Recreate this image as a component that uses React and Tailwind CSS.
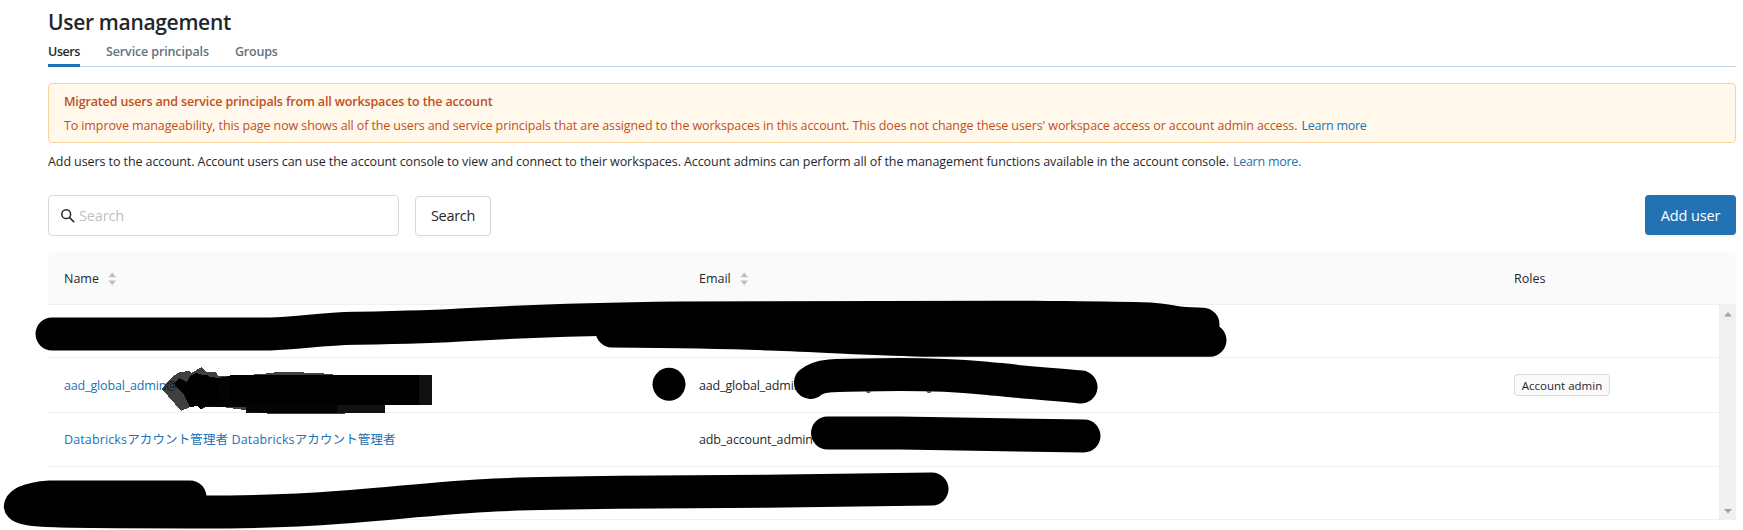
import React from 'react';

const rows = [
  { h: 'h-[53px]' },
  { h: 'h-[55px] pt-0.5', name: 'aad_global_admin@', email: 'aad_global_admin', role: 'Account admin', track: 'tracking-[-0.15px]' },
  { h: 'h-[54px]', name: 'Databricksアカウント管理者 Databricksアカウント管理者', email: 'adb_account_admin', track: 'tracking-[0.13px]' },
  { h: 'h-[53px]' },
];

const fit = 'whitespace-nowrap';

function Sorter() {
  return (
    <svg width="9" height="14" viewBox="0 0 9 14" className="fill-[#bfbfbf]">
      <path d="M4.2 .6 8 5.2H.4z" />
      <path d="M4.2 13.2 8 8.6H.4z" />
    </svg>
  );
}

function Redactions() {
  return (
    <svg className="pointer-events-none absolute left-0 top-0" width="1743" height="530" viewBox="0 0 1743 530" fill="none">
      <g shapeRendering="crispEdges">
        <path fillOpacity=".75" fill="#000" d="M162 389 168 381 173 376 180 372 190 371 191 373 202 367 206 372H216L218 376 230 376 262 374 278 372H288L320 373 337 375V413H345V414H270L245 410 222 407 208 406 202 409 198 406 190 407 181 411z" />
        <path fillOpacity=".935" fill="#000" d="M174 383 179 378 187 382 190 376 196 373 206 376 218 378 230 376 432 375V405H385V413H246V407H203L201 410 198 406 190 407 184 395 176 387z" />
        <path fill="#000" d="M186 384 190 378 194 374 199 376 208 375 210 378H216L222 401 210 405 203 406 201 410 198 406 190 405 186 396 182 390z" />
        <path fill="#000" d="M230 375H419V405H230z" />
      </g>
      <path d="M866.500 391.500q2 1.500 4 0M927 391.500q2 1.500 4 0" stroke="#3b3f55" strokeWidth="1.300" />
      <g stroke="#000" strokeWidth="33" strokeLinecap="round" strokeLinejoin="round">
        <path d="M52 334H270C300 333 320 329 355 328.300C400 327.500 430 327 470 324.500C540 320.500 600 319 680 318C760 317 900 317 1035 317.200C1080 317.800 1110 318 1150 319C1165 320 1175 323 1185 323.500L1203 324.200" />
        <path d="M612 331C680 331.500 720 332 770 334C830 336 880 339.500 930 340.200H1210" />
        <path d="M810.500 382.500C820 374 835 375 900 374.500C960 374.500 970 377 1000 379.500C1030 383 1050 384 1081 387" />
        <path d="M827.500 433H900L1084 436" />
        <path d="M190 497H50C35 498 22 502 20.500 506C25 511 50 512 200 512C290 512 340 508 400 502.300C480 495 500 493.500 620 492.300C760 491.500 780 491 932 489" />
      </g>
      <circle cx="669" cy="384.300" r="16.500" fill="#000" />
    </svg>
  );
}

export default function App() {
  return (
    <div className="relative h-[530px] w-[1743px] overflow-hidden bg-white pl-12 pr-[7px] font-['Open_Sans','Noto_Sans_CJK_JP',sans-serif] text-[12.5px] leading-5 text-[#1f272d]">
      <h1 className="pt-2 text-[21px] font-semibold leading-7 tracking-[-0.32px]"><span className={fit}>User management</span></h1>
      <nav className="flex h-[31px] border-b border-[#c5d7e8] pt-[5px] font-semibold text-[#64727d]">
        <a className="mr-[26px] h-[26px] w-8 border-b-[3px] border-[#2272b4] pt-px tracking-[-0.4px] text-[#1f272d]"><span className={fit}>Users</span></a>
        <a className="mr-[26px] w-[103px] pt-px tracking-[-0.13px]"><span className={fit}>Service principals</span></a>
        <a className="pt-px tracking-[-0.2px]"><span className={fit}>Groups</span></a>
      </nav>
      <section className="mt-4 h-[60px] rounded border border-[#f8d4a0] bg-[#fff8eb] px-[15px] pt-2 text-[#be501e]">
        <div className="h-6 font-semibold tracking-[-0.15px]"><span className={fit}>Migrated users and service principals from all workspaces to the account</span></div>
        <div className="flex gap-1 tracking-[-0.108px]">
          <span className={fit}>To improve manageability, this page now shows all of the users and service principals that are assigned to the workspaces in this account. This does not change these users' workspace access or account admin access.</span>
          <a className="whitespace-nowrap tracking-[-0.25px] text-[#2272b4]">Learn more</a>
        </div>
      </section>
      <p className="mt-[9px] flex gap-1 tracking-[-0.085px]">
        <span className={fit}>Add users to the account. Account users can use the account console to view and connect to their workspaces. Account admins can perform all of the management functions available in the account console.</span>
        <a className="whitespace-nowrap tracking-[-0.25px] text-[#2272b4]">Learn more.</a>
      </p>
      <div className="mt-[23px] flex h-[41px] items-end text-[14.5px]">
        <div className="flex h-[41px] w-[351px] items-center rounded border border-[#d9d9d9] pl-3">
          <svg width="14" height="14" viewBox="0 0 14 14" fill="none" stroke="#1f272d" strokeWidth="1.500">
            <circle cx="5.200" cy="5.200" r="4.400" />
            <path d="M8.400 8.400 13.200 13.200" />
          </svg>
          <span className="ml-1 tracking-[-0.15px] text-[#bfbfbf]">Search</span>
        </div>
        <button className="ml-4 h-10 w-[76px] rounded border border-[#d9d9d9] tracking-[-0.3px] shadow-[0_2px_0_rgba(0,0,0,0.015)]">Search</button>
        <button className="mb-px ml-auto h-10 w-[91px] rounded bg-[#2272b4] pt-0.5 tracking-[-0.1px] text-white shadow-[0_2px_0_rgba(0,0,0,0.045)]"><span className={fit}>Add user</span></button>
      </div>
      <div className="mt-4 flex h-[52px] items-center rounded-t bg-[#fafafa] pl-4 pt-0.5 font-medium">
        <div className="flex w-[635px] items-center gap-[9px]"><span>Name</span><Sorter /></div>
        <div className="flex w-[815px] items-center gap-[9px]"><span>Email</span><Sorter /></div>
        <div>Roles</div>
      </div>
      <div className="flex h-[216px]">
        <div className="w-[1671px] border-t border-[#f0f0f0]">
          {rows.map((r, i) => (
            <div key={i} className={`flex items-center border-b border-[#f0f0f0] pl-4 ${r.h}`}>
              <div className={`w-[635px] text-[#2272b4] ${r.track || ''}`}><span className={fit}>{r.name}</span></div>
              <div className="w-[815px] tracking-[-0.15px]"><span className={fit}>{r.email}</span></div>
              {r.role && <span className="-mt-0.5 flex h-[22px] w-24 items-center justify-center rounded border border-[#d9d9d9] bg-[#fafafa] pt-px text-[11.5px]">{r.role}</span>}
            </div>
          ))}
        </div>
        <div className="flex w-[17px] flex-col items-center justify-between bg-[#f0f0f0] pb-1.5 pt-2">
          <svg width="8" height="5" viewBox="0 0 8 5" className="fill-[#a3a3a3]"><path d="M4 0 8 4.500H0z" /></svg>
          <svg width="8" height="5" viewBox="0 0 8 5" className="fill-[#a3a3a3]"><path d="M4 4.500 8 0H0z" /></svg>
        </div>
      </div>
      <Redactions />
    </div>
  );
}
